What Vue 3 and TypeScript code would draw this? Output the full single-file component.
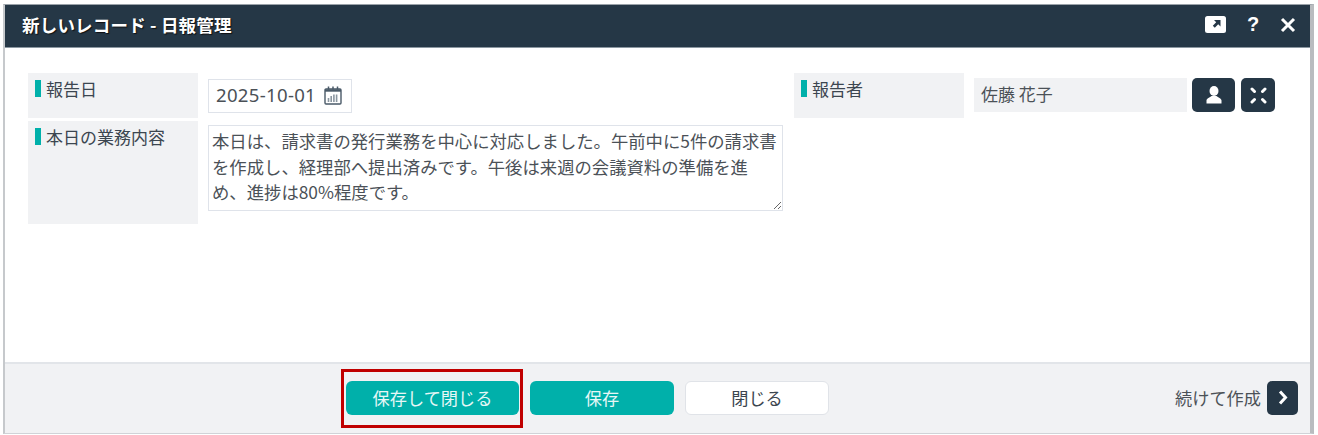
<script setup lang="ts">
const body = '本日は、請求書の発行業務を中心に対応しました。午前中に5件の請求書を作成し、経理部へ提出済みです。午後は来週の会議資料の準備を進め、進捗は80%程度です。'
</script>

<template>
  <div class="page">
    <div class="dialog">
      <header class="head">
        <span class="title">新しいレコード - 日報管理</span>
        <div class="head-icons">
          <svg width="21" height="17" viewBox="0 0 21 17">
            <rect x="0" y="0" width="21" height="17" rx="2.500" fill="#fff" />
            <path d="M9 4h6.500v6.500l-2.300-2.200-3.400 3.400-2-2 3.400-3.400z" fill="#253746" />
          </svg>
          <span class="help">?</span>
          <svg width="16" height="16" viewBox="0 0 16 16">
            <path d="M2 2l12 12M14 2L2 14" stroke="#fff" stroke-width="3" fill="none" />
          </svg>
        </div>
      </header>

      <main class="form">
        <div class="col-left">
          <div class="row row-date">
            <div class="label">報告日</div>
            <div class="date-input">
              <span>2025-10-01</span>
              <svg width="18" height="19" viewBox="0 0 18 19">
                <rect x="1" y="3" width="16" height="15" rx="1" fill="none" stroke="#4a5a68" stroke-width="1.400" />
                <path d="M1 4.500h16" stroke="#4a5a68" stroke-width="2.400" />
                <path d="M4.500 0.500v3M9 0.500v3M13.500 0.500v3" stroke="#4a5a68" stroke-width="1.500" />
                <path d="M4.500 12v4M7.200 10v6M9.900 8.500v7.500M12.600 8.500v7.500" stroke="#8a96a0" stroke-width="1.600" />
              </svg>
            </div>
          </div>
          <div class="row row-body">
            <div class="label label-tall">本日の業務内容</div>
            <textarea class="memo" :value="body"></textarea>
          </div>
        </div>

        <div class="col-right">
          <div class="label">報告者</div>
          <div class="person">佐藤 花子</div>
          <button class="icon-btn user">
            <svg width="16" height="18" viewBox="0 0 16 18">
              <ellipse cx="8" cy="5" rx="4.500" ry="5" fill="#fff" />
              <path d="M0.500 17.500v-3c0-2 3.500-3 5-4.500h5c1.500 1.500 5 2.500 5 4.500v3z" fill="#fff" />
            </svg>
          </button>
          <button class="icon-btn expand">
            <svg width="17" height="17" viewBox="0 0 17 17">
              <path d="M2 2l2.500 2.500M15 2l-2.500 2.500M2 15l2.500-2.500M15 15l-2.500-2.500" stroke="#fff" stroke-width="3" stroke-linecap="round" fill="none" />
            </svg>
          </button>
        </div>
      </main>

      <footer class="foot">
        <div class="actions">
          <button class="btn primary wide">保存して閉じる</button>
          <button class="btn primary">保存</button>
          <button class="btn plain">閉じる</button>
        </div>
        <div class="next">
          <span>続けて作成</span>
          <button class="icon-btn arrow">
            <svg width="12" height="15" viewBox="0 0 12 15">
              <path d="M3 1.500l5.500 6-5.500 6" fill="none" stroke="#fff" stroke-width="3" />
            </svg>
          </button>
        </div>
        <div class="mark"></div>
      </footer>
    </div>
  </div>
</template>

<style>
html, body {
  margin: 0;
  background: #fff;
}
</style>

<style scoped>
.page {
  width: 1318px;
  height: 435px;
  padding: 4px 4px 1px 3px;
  box-sizing: border-box;
  overflow: hidden;
  font-family: "Noto Sans CJK JP", "Noto Sans", sans-serif;
  color: #3c4650;
}
.dialog {
  height: 430px;
  display: flex;
  flex-direction: column;
  box-sizing: border-box;
  border-left: 2px solid #c6c9cc;
  border-right: 4px solid #b9bcbf;
  border-top: 1px solid #9aa2a9;
  border-bottom: 1px solid #d0d3d7;
  background: #fff;
}
.head {
  height: 43px;
  flex: none;
  display: flex;
  align-items: center;
  justify-content: space-between;
  background: #253746;
  color: #fff;
  padding: 0 14px 0 17px;
  box-sizing: border-box;
  border-bottom: 1px solid #8b97a1;
}
.title {
  font-size: 17.500px;
  font-weight: 700;
  letter-spacing: 0.200px;
  text-shadow: 1px 1px 1px #111;
  margin-top: -3px;
}
.head-icons {
  display: flex;
  align-items: center;
  gap: 19px;
  margin-top: -3px;
}
.help {
  font-family: "Liberation Sans", sans-serif;
  font-size: 20px;
  font-weight: 700;
  width: 16px;
  text-align: center;
}
.form {
  flex: 1;
  display: flex;
  padding: 25px 0 0 23px;
  gap: 11px;
}
.col-left {
  width: 755px;
  display: flex;
  flex-direction: column;
  gap: 3px;
}
.row {
  display: flex;
  gap: 10px;
}
.label {
  width: 170px;
  height: 45px;
  flex: none;
  box-sizing: border-box;
  background: #f1f2f4;
  padding: 4px 0 0 7px;
  font-size: 17px;
  line-height: 24px;
  display: flex;
  align-items: flex-start;
}
.label::before {
  content: "";
  width: 6px;
  height: 17px;
  background: #00b0aa;
  margin: 3px 5px 0 0;
  flex: none;
}
.label-tall {
  height: 103px;
}
.row-date {
  align-items: center;
}
.date-input {
  width: 144px;
  height: 34px;
  box-sizing: border-box;
  border: 1px solid #dfe3ea;
  display: flex;
  align-items: center;
  gap: 8px;
  padding: 0 0 2px 7px;
  font-size: 18.600px;
  letter-spacing: 0.300px;
  color: #4b5157;
  font-family: "Noto Sans", sans-serif;
}
.date-input svg {
  margin-top: 2px;
}
.row-body {
  align-items: flex-start;
}
.memo {
  width: 575px;
  height: 86px;
  margin-top: 4px;
  box-sizing: border-box;
  border: 1px solid #dfe3ea;
  border-radius: 0;
  padding: 2px 3px;
  font-family: "Noto Sans CJK JP", sans-serif;
  font-size: 17.350px;
  line-height: 25.500px;
  color: #4b5157;
  overflow: hidden;
  resize: both;
  outline: none;
}
.col-right {
  display: flex;
  align-items: flex-start;
}
.person {
  width: 213px;
  height: 34px;
  margin: 5px 0 0 10px;
  box-sizing: border-box;
  background: #f1f2f4;
  padding-left: 7px;
  font-size: 17px;
  line-height: 31px;
  color: #4b5157;
}
.icon-btn {
  border: none;
  border-radius: 5px;
  background: #253746;
  padding: 0;
  display: flex;
  align-items: center;
  justify-content: center;
  height: 34px;
}
.user {
  width: 43px;
  margin: 5px 0 0 5px;
}
.expand {
  width: 34px;
  margin: 5px 0 0 6px;
}
.foot {
  position: relative;
  height: 71px;
  flex: none;
  box-sizing: border-box;
  background: #f1f2f4;
  border-top: 2px solid #e2e5e9;
  display: flex;
  align-items: center;
  padding: 0 12px 2px 341px;
  justify-content: space-between;
}
.actions {
  display: flex;
  gap: 11px;
}
.btn {
  width: 144px;
  height: 34px;
  border-radius: 6px;
  font-family: inherit;
  font-size: 17.200px;
  padding: 0;
}
.wide {
  width: 173px;
}
.primary {
  background: #00b0aa;
  border: none;
  color: #e6f7f6;
}
.plain {
  background: #fff;
  border: 1px solid #e0e3e8;
  color: #3c4650;
}
.next {
  display: flex;
  align-items: center;
  gap: 6px;
  font-size: 17.200px;
  color: #4b5157;
}
.arrow {
  width: 31px;
  height: 34px;
}
.mark {
  position: absolute;
  left: 336px;
  top: 5px;
  width: 182px;
  height: 59px;
  box-sizing: border-box;
  border: 3px solid #c00000;
}
</style>
